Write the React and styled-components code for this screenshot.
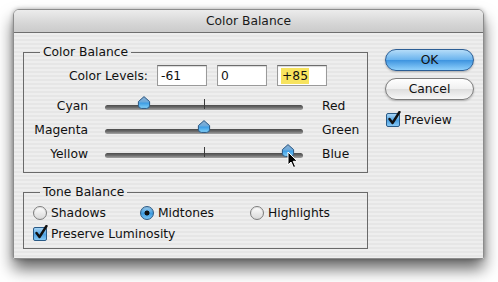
import React from 'react'
import styled, { createGlobalStyle } from 'styled-components'

const GlobalStyle = createGlobalStyle`
    html, body {
        margin: 0;
        background: #fff;
    }
    body {
        font-family: "DejaVu Sans", "Liberation Sans", sans-serif;
        font-size: 12.3px;
        color: #111;
    }
`;

const sliders = [
    { left: 'Cyan', right: 'Red', value: -61 },
    { left: 'Magenta', right: 'Green', value: 0 },
    { left: 'Yellow', right: 'Blue', value: 85, cursor: true },
];

function Thumb() {
    return (
        <ThumbSvg width="14" height="13" viewBox="0 0 14 13">
            <defs>
                <linearGradient id="thumbFill" x1="0" y1="0" x2="0" y2="1">
                    <stop offset="0" stopColor="#8fb0cf" />
                    <stop offset="0.45" stopColor="#6aa9dc" />
                    <stop offset="0.55" stopColor="#3d9de4" />
                    <stop offset="1" stopColor="#86d4fb" />
                </linearGradient>
            </defs>
            <path d="M7 0.6 L12.6 5.6 L12.6 9.4 Q12.6 12.4 9.6 12.4 L4.4 12.4 Q1.4 12.4 1.4 9.4 L1.4 5.6 Z"
                fill="url(#thumbFill)" stroke="#2a5783" strokeWidth="1" />
        </ThumbSvg>
    )
}

function Slider({ value, cursor }) {
    // value -100..100 mapped across the track
    const pct = 50 + value / 2;
    return (
        <Track>
            <Tick />
            <ThumbHolder style={{ left: `${pct}%` }}>
                <Thumb />
            </ThumbHolder>
            {cursor && (
                <Cursor style={{ left: `${pct}%` }} width="12" height="18" viewBox="0 0 12 18">
                    <path d="M1 1 L1 14 L4 11 L6.5 16.5 L8.6 15.6 L6.2 10.3 L10.4 10.3 Z"
                        fill="#000" stroke="#fff" strokeWidth="1" strokeLinejoin="round" />
                </Cursor>
            )}
        </Track>
    )
}

function Radio({ checked, label }) {
    return (
        <RadioItem>
            <RadioDot checked={checked} />
            {label}
        </RadioItem>
    )
}

function CheckBox({ label }) {
    return (
        <CheckItem>
            <Box>
                <svg width="14" height="15" viewBox="0 0 14 15">
                    <path d="M2.5 8 L5.5 12 L12.5 1" fill="none" stroke="#111" strokeWidth="2.4" strokeLinecap="round" strokeLinejoin="round" />
                </svg>
            </Box>
            {label}
        </CheckItem>
    )
}

function App() {
    return (
        <>
            <GlobalStyle />
            <Page>
                <Window>
                    <TitleBar>Color Balance</TitleBar>
                    <Body>
                        <LeftCol>
                            <Group>
                                <Legend>Color Balance</Legend>
                                <LevelsRow>
                                    <LevelsLabel>Color Levels:</LevelsLabel>
                                    <Field>-61</Field>
                                    <Field>0</Field>
                                    <Field><Mark>+85</Mark></Field>
                                </LevelsRow>
                                <SliderGrid>
                                    {sliders.map((s) => (
                                        <React.Fragment key={s.left}>
                                            <SideLabel align="right">{s.left}</SideLabel>
                                            <Slider value={s.value} cursor={s.cursor} />
                                            <SideLabel>{s.right}</SideLabel>
                                        </React.Fragment>
                                    ))}
                                </SliderGrid>
                            </Group>
                            <Group second>
                                <Legend>Tone Balance</Legend>
                                <RadioRow>
                                    <Radio label="Shadows" />
                                    <Radio label="Midtones" checked />
                                    <Radio label="Highlights" />
                                </RadioRow>
                                <CheckRow>
                                    <CheckBox label="Preserve Luminosity" />
                                </CheckRow>
                            </Group>
                        </LeftCol>
                        <RightCol>
                            <Button primary>OK</Button>
                            <Button>Cancel</Button>
                            <PreviewRow>
                                <CheckBox label="Preview" />
                            </PreviewRow>
                        </RightCol>
                    </Body>
                </Window>
            </Page>
        </>
    )
}

const Page = styled.div`
    height: 282px;
    box-sizing: border-box;
    padding: 9px 0 0 13px;
    background: #fff;
`;

const Window = styled.div`
    width: 471px;
    height: 250px;
    box-sizing: border-box;
    border: 1px solid #8c8c8c;
    border-radius: 6px 6px 2px 2px;
    overflow: hidden;
    box-shadow: 0 10px 16px rgba(0, 0, 0, 0.6), 0 0 4px rgba(0, 0, 0, 0.3);
    display: flex;
    flex-direction: column;
`;

const TitleBar = styled.div`
    height: 22px;
    flex: none;
    display: flex;
    align-items: center;
    justify-content: center;
    background: linear-gradient(#ececec, #d6d6d6 60%, #cbcbcb);
    border-bottom: 1px solid #6e6e6e;
    color: #1a1a1a;
`;

const Body = styled.div`
    flex: 1;
    display: flex;
    gap: 17px;
    padding: 12px 0 0 9px;
    background: repeating-linear-gradient(#eeeeee 0 2px, #e6e6e6 2px 4px);
`;

const LeftCol = styled.div`
    width: 345px;
    display: flex;
    flex-direction: column;
`;

const Group = styled.fieldset`
    margin: ${(p) => (p.second ? '12px 0 0' : '0')};
    padding: 0 0 ${(p) => (p.second ? '7px' : '6px')};
    border: 1px solid #6a6a6a;
    min-width: 0;
`;

const Legend = styled.legend`
    margin-left: 16px;
    padding: 0 3px;
    line-height: 15px;
`;

const LevelsRow = styled.div`
    display: flex;
    align-items: center;
    gap: 10px;
    margin-top: 5px;
`;

const LevelsLabel = styled.div`
    width: 124px;
    text-align: right;
    margin-right: -1px;
`;

const Field = styled.div`
    width: 50px;
    height: 21px;
    box-sizing: border-box;
    display: flex;
    align-items: center;
    padding-left: 3px;
    background: #fff;
    border: 1px solid #9a9a9a;
    border-top-color: #6c6c6c;
    box-shadow: inset 0 1px 1px rgba(0, 0, 0, 0.15);
`;

const Mark = styled.span`
    background: #f7e35e;
    padding: 1px 1px;
`;

const SliderGrid = styled.div`
    display: grid;
    grid-template-columns: 64px 198px auto;
    column-gap: 17px;
    grid-auto-rows: 24px;
    align-items: center;
    margin-top: 8px;
`;

const SideLabel = styled.div`
    text-align: ${(p) => p.align || 'left'};
    margin-left: ${(p) => (p.align ? '0' : '2px')};
`;

const Track = styled.div`
    position: relative;
    height: 5px;
    margin-top: 3px;
    border-radius: 3px;
    background: linear-gradient(#4a4a4a, #6d6d6d 50%, #a5a5a5);
`;

const Tick = styled.div`
    position: absolute;
    left: 99px;
    top: -6px;
    width: 1px;
    height: 10px;
    background: #3a3a3a;
`;

const ThumbHolder = styled.div`
    position: absolute;
    top: -9px;
    width: 0;
`;

const ThumbSvg = styled.svg`
    display: block;
    margin-left: -7px;
`;

const Cursor = styled.svg`
    position: absolute;
    top: -2px;
    margin-left: -1px;
`;

const RadioRow = styled.div`
    display: grid;
    grid-template-columns: 107px 110px auto;
    padding-left: 9px;
    margin-top: 6px;
`;

const RadioItem = styled.div`
    display: flex;
    align-items: center;
    gap: 4px;
`;

const RadioDot = styled.span`
    width: 14px;
    height: 14px;
    box-sizing: border-box;
    border-radius: 50%;
    border: 1px solid ${(p) => (p.checked ? '#2a5a86' : '#7d7d7d')};
    background: ${(p) => (p.checked
        ? 'radial-gradient(circle, #111 0 2.2px, transparent 2.8px), linear-gradient(#9fd0f3, #3d9be0 55%, #7cc6f6)'
        : 'linear-gradient(#ffffff, #e9e9e9 55%, #d9d9d9)')};
    box-shadow: inset 0 1px 1px rgba(0, 0, 0, 0.12);
`;

const CheckRow = styled.div`
    padding-left: 9px;
    margin-top: 7px;
`;

const CheckItem = styled.div`
    display: flex;
    align-items: center;
    gap: 4px;
`;

const Box = styled.span`
    position: relative;
    width: 14px;
    height: 14px;
    box-sizing: border-box;
    border: 1px solid #2a5a86;
    border-radius: 2px;
    background: linear-gradient(#a6d4f5, #4fa2e2 55%, #86c8f5);
    svg {
        position: absolute;
        left: 0;
        top: -3px;
    }
`;

const RightCol = styled.div`
    width: 89px;
    padding-top: 4px;
    display: flex;
    flex-direction: column;
`;

const Button = styled.div`
    height: 22px;
    box-sizing: border-box;
    margin-bottom: 7px;
    display: flex;
    align-items: center;
    justify-content: center;
    border-radius: 11px;
    border: 1px solid ${(p) => (p.primary ? '#2c5e95' : '#7c7c7c')};
    background: ${(p) => (p.primary
        ? 'linear-gradient(#b4dcf8, #6bb4ee 48%, #3f95e0 52%, #8fd0fb)'
        : 'linear-gradient(#ffffff, #f0f0f0 48%, #dedede 52%, #f8f8f8)')};
    box-shadow: 0 1px 2px rgba(0, 0, 0, 0.25);
`;

const PreviewRow = styled.div`
    margin-top: 6px;
    padding-left: 1px;
`;

export default App
